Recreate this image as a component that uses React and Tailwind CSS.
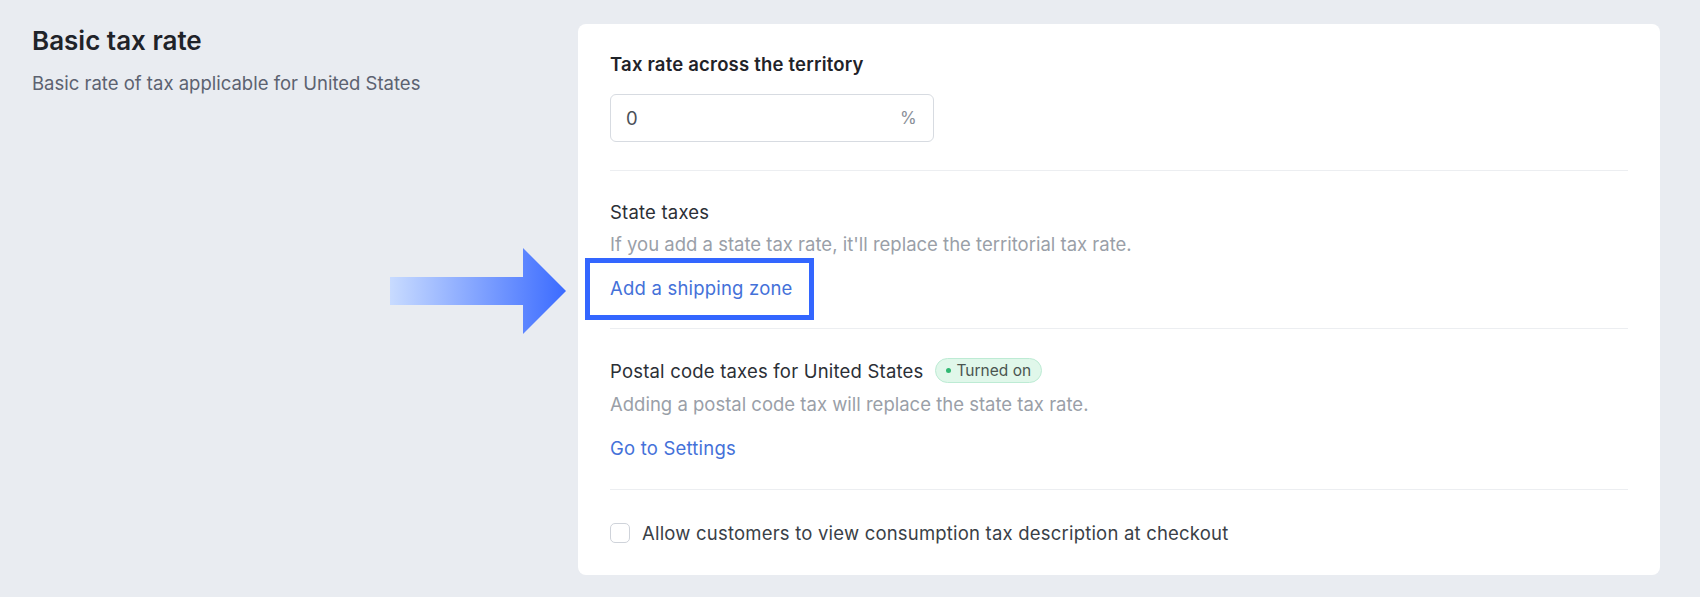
import React from 'react'

const font = { fontFamily: 'Inter, "Noto Sans", sans-serif' }

const Divider = () => <div className="h-px bg-[#eceef1]" />

const Arrow = () => (
  <svg
    className="absolute left-[390px] top-[248px]"
    width="176"
    height="86"
    viewBox="0 0 176 86"
  >
    <defs>
      <linearGradient id="arrowGrad" x1="0" y1="0" x2="1" y2="0">
        <stop offset="0" stopColor="#c8dbff" />
        <stop offset="1" stopColor="#3b6bff" />
      </linearGradient>
    </defs>
    <path d="M0 29 H133 V0 L176 43 L133 86 V57 H0 Z" fill="url(#arrowGrad)" />
  </svg>
)

const App = () => {
  return (
    <div className="relative w-[1700px] h-[597px] bg-[#e9ecf1] flex overflow-hidden" style={font}>
      {/* left description */}
      <div className="w-[578px] shrink-0 pl-[32px] pt-[25px]">
        <h2 className="text-[26px] leading-[32px] font-semibold text-[#1f2329]">Basic tax rate</h2>
        <p className="mt-[14px] text-[18.5px] leading-[24px] text-[#5c6270]">
          Basic rate of tax applicable for United States
        </p>
      </div>

      {/* card */}
      <div className="mt-[24px] mb-[22px] mr-[40px] flex-1 bg-white rounded-[8px] px-[32px] pt-[28px] text-[18.5px] leading-[24px] tracking-[0.2px]">
        <div className="font-semibold text-[#1f2329]">Tax rate across the territory</div>
        <div className="mt-[18px] w-[324px] h-[48px] rounded-[6px] border border-[#d7dbe1] flex items-center justify-between pl-[15px] pr-[16px]">
          <span className="text-[#4b5058]">0</span>
          <span className="text-[17px] text-[#8a8f98]">%</span>
        </div>
        <div className="mt-[28px]">
          <Divider />
        </div>

        {/* state taxes */}
        <div className="pt-[29px] pb-[28px]">
          <div className="text-[#2b2f36]">State taxes</div>
          <div className="mt-[8px] text-[#9a9fa8] tracking-normal">
            If you add a state tax rate, it'll replace the territorial tax rate.
          </div>
          <div className="mt-[20px]">
            <a className="relative inline-block text-[#4471d9] cursor-pointer">
              Add a shipping zone
              <span className="absolute -top-[18px] -bottom-[20px] -left-[25px] -right-[21px] border-[5px] border-[#3366ff]" />
            </a>
          </div>
        </div>
        <Divider />

        {/* postal code */}
        <div className="pt-[29px] pb-[29px]">
          <div className="flex items-center">
            <span className="text-[#2b2f36]">Postal code taxes for United States</span>
            <span className="ml-[11px] h-[25px] px-[10px] rounded-full bg-[#e0f7ea] border border-[#bdebd4] flex items-center gap-[6px] text-[15.5px] tracking-normal text-[#4a5550]">
              <span className="w-[5px] h-[5px] rounded-full bg-[#2fb872]" />
              Turned on
            </span>
          </div>
          <div className="mt-[9px] text-[#9a9fa8] tracking-normal">
            Adding a postal code tax will replace the state tax rate.
          </div>
          <div className="mt-[20px] text-[#4471d9] cursor-pointer">Go to Settings</div>
        </div>
        <Divider />

        {/* checkbox */}
        <label className="pt-[31px] flex items-center gap-[12px]">
          <span className="w-[20px] h-[20px] shrink-0 rounded-[5px] border border-[#cfd3da] bg-white" />
          <span className="text-[#3a3f47]">
            Allow customers to view consumption tax description at checkout
          </span>
        </label>
      </div>

      <Arrow />
    </div>
  )
}

export default App
